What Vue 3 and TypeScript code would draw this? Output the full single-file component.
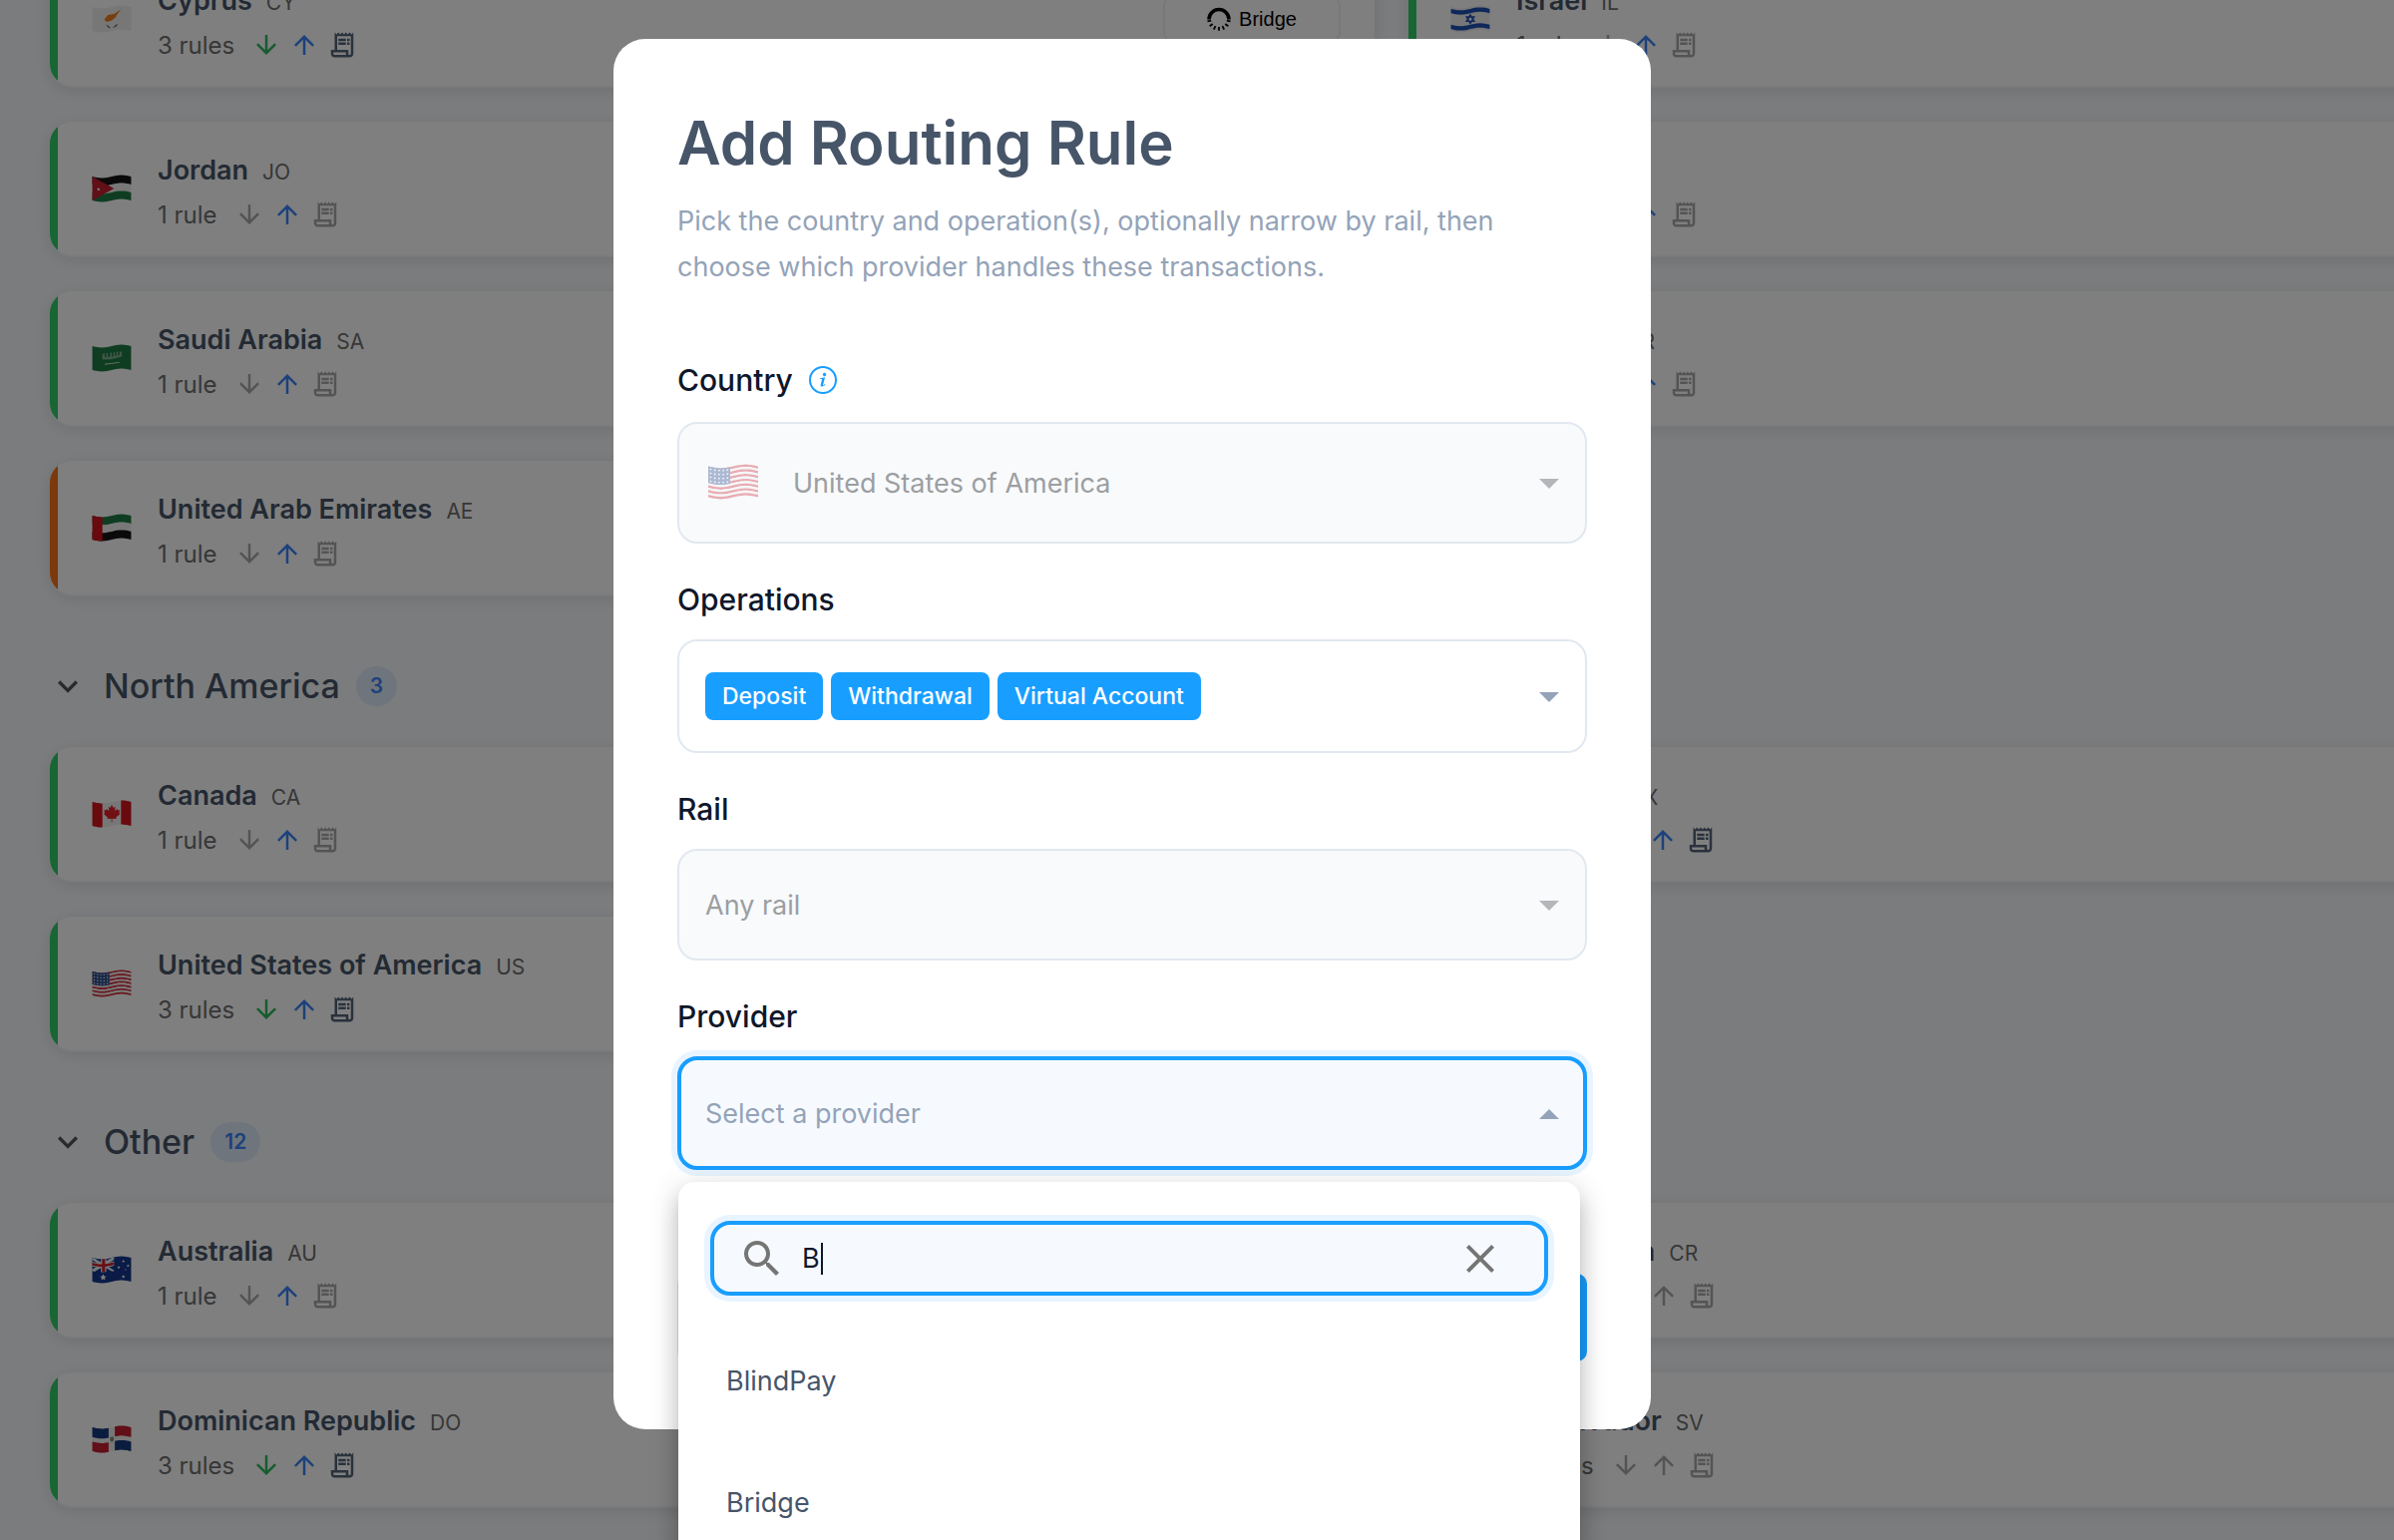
<script setup lang="ts">
import { ref } from 'vue'

type Shape = { d: string; fill: string }
type Country = {
  name: string
  code: string
  rules: string
  tone: 'ok' | 'warn'
  deposit: boolean
  withdraw: boolean
  account: boolean
  provider?: string
}
type Region = { name: string; count: number; countries: Country[] }

// Height of a waving flag's upper edge at a horizontal position.
const edge = (x: number): number => 2.5 + 1.9 * Math.sin((x / 50) * Math.PI * 2)

// Part of a waving flag between two columns and two relative heights.
function patch(x0: number, x1: number, a: number, b: number, fill: string): Shape {
  const steps = 12
  const top: string[] = []
  const bottom: string[] = []
  for (let i = 0; i <= steps; i++) {
    const x = x0 + ((x1 - x0) * i) / steps
    top.push(`${x.toFixed(1)} ${(edge(x) + a * 31).toFixed(1)}`)
    bottom.unshift(`${x.toFixed(1)} ${(edge(x) + b * 31).toFixed(1)}`)
  }
  return { d: `M${top.join('L')}L${bottom.join('L')}Z`, fill }
}

const star = (x: number, y: number, r: number, fill = '#fff'): Shape => {
  const pts = Array.from({ length: 10 }, (_, i) => {
    const q = i % 2 ? r * 0.45 : r
    const t = (i * Math.PI) / 5 - Math.PI / 2
    return `${(x + q * Math.cos(t)).toFixed(1)} ${(y + q * Math.sin(t)).toFixed(1)}`
  })
  return { d: `M${pts.join('L')}Z`, fill }
}

const usStripes = Array.from({ length: 13 }, (_, i) => patch(0, 50, i / 13, (i + 1) / 13, i % 2 ? '#f2f2f2' : '#d22f3c'))
const usStars = Array.from({ length: 20 }, (_, i) => {
  const x = 2.5 + (i % 5) * 4.2
  return star(x, edge(x) + 2.4 + Math.floor(i / 5) * 4, 1.3)
})

const flags: Record<string, Shape[]> = {
  CY: [
    patch(0, 50, 0, 1, '#eeeeee'),
    { d: 'M16 18L20 13L28 11.500L37 5.500L31 13.500L30 16L25 20L19 22L16 20Z', fill: '#f07d1c' },
    { d: 'M18 25Q21 26 24 30Q19 30 18 25ZM33 24Q29 25 26 29.500Q32 29 33 24Z', fill: '#7c8a78' },
  ],
  JO: [
    patch(0, 50, 0, 0.34, '#141414'),
    patch(0, 50, 0.33, 0.67, '#f0f0f0'),
    patch(0, 50, 0.66, 1, '#1d7a45'),
    { d: 'M0 2.500L28 18L0 33.500Z', fill: '#c41e2e' },
    star(8, 19, 2.4),
  ],
  SA: [
    patch(0, 50, 0, 1, '#1f7a42'),
    { d: 'M13 13L16 12V17H18V11.500H20V17L23 16V11H25V16H27V10.500H29V15H31V10H33V14.500H35V9.500H38V16L24 19.500L13 20Z', fill: '#7fae90' },
    { d: 'M16 25.500L35 23V24.200L16 26.800Z', fill: '#d9ebdf' },
  ],
  AE: [
    patch(0, 50, 0, 0.34, '#1d7a45'),
    patch(0, 50, 0.33, 0.67, '#f0f0f0'),
    patch(0, 50, 0.66, 1, '#141414'),
    patch(0, 13, 0, 1, '#d3141e'),
  ],
  CA: [
    patch(0, 50, 0, 1, '#eeeeee'),
    patch(0, 13, 0, 1, '#d3141e'),
    patch(37, 50, 0, 1, '#d3141e'),
    { d: 'M25 6L27 10L29.500 9L29 14L32 11.500L33 13.500L35.500 13L34.500 17L36 18L30.500 22.500L31 24.500L25.600 24V29H24.600V24L19 24.500L19.800 22.500L14.500 18L16 17L15 13L17.500 13.500L18.500 11.500L21.500 14L21 9L23.300 10Z', fill: '#e0202a' },
  ],
  US: [...usStripes, patch(0, 22, 0, 7 / 13, '#33528f'), ...usStars],
  AU: [
    patch(0, 50, 0, 1, '#12378c'),
    { d: 'M0 3L3 3.500L28 18.500V20L25 20L0 5.500Z', fill: '#f0f0f0' },
    { d: 'M28 2.500V5L3 20.500L0 19.500V17.500L25 2.500Z', fill: '#f0f0f0' },
    patch(11, 18, 0, 0.54, '#f0f0f0'),
    patch(0, 28, 0.17, 0.36, '#f0f0f0'),
    patch(12.5, 16.5, 0, 0.54, '#d3202c'),
    patch(0, 28, 0.21, 0.32, '#d3202c'),
    star(14, 28, 4.4),
    star(40, 7, 2),
    star(34, 15, 2),
    star(46, 13, 2),
    star(40, 27, 2.4),
    star(43, 18, 1.2),
  ],
  DO: [
    patch(0, 50, 0, 1, '#eeeeee'),
    patch(0, 21, 0, 0.41, '#173a7d'),
    patch(29, 50, 0, 0.41, '#c41e2e'),
    patch(0, 21, 0.6, 1, '#c41e2e'),
    patch(29, 50, 0.6, 1, '#173a7d'),
    { d: 'M23 15H27.500V19.500L25 21.500L23 19.500Z', fill: '#7d8c74' },
  ],
  IL: [
    patch(0, 50, 0, 1, '#eeeeee'),
    patch(0, 50, 0.08, 0.26, '#1f50b5'),
    patch(0, 50, 0.74, 0.92, '#1f50b5'),
    { d: 'M25 11L31.500 22H18.500ZM25 14.500L21.600 20.200H28.400Z', fill: '#1f50b5' },
    { d: 'M25 25.500L18.500 14.500H31.500ZM25 22L28.400 16.300H21.600Z', fill: '#1f50b5' },
  ],
  QA: [patch(0, 50, 0, 1, '#8a1538'), patch(0, 16, 0, 1, '#eeeeee')],
  TR: [patch(0, 50, 0, 1, '#d3141e'), star(28, 18, 4)],
  MX: [patch(0, 17, 0, 1, '#1d7a45'), patch(17, 33, 0, 1, '#eeeeee'), patch(33, 50, 0, 1, '#d3141e')],
  CR: [patch(0, 50, 0, 1, '#173a7d'), patch(0, 50, 0.17, 0.83, '#eeeeee'), patch(0, 50, 0.33, 0.67, '#d3141e')],
  SV: [patch(0, 50, 0, 1, '#1f50b5'), patch(0, 50, 0.33, 0.67, '#eeeeee')],
}

function country(name: string, code: string, rules: string, ops: string, extra: Partial<Country> = {}): Country {
  return {
    name,
    code,
    rules,
    tone: 'ok',
    deposit: ops.includes('d'),
    withdraw: ops.includes('w'),
    account: ops.includes('a'),
    ...extra,
  }
}

const regions: Region[] = [
  {
    name: 'Middle East',
    count: 7,
    countries: [
      country('Cyprus', 'CY', '3 rules', 'dwa', { provider: 'Bridge' }),
      country('Israel', 'IL', '1 rule', 'w'),
      country('Jordan', 'JO', '1 rule', 'w'),
      country('Qatar', 'QA', '1 rule', 'w'),
      country('Saudi Arabia', 'SA', '1 rule', 'w'),
      country('Türkiye', 'TR', '1 rule', 'w'),
      country('United Arab Emirates', 'AE', '1 rule', 'w', { tone: 'warn' }),
    ],
  },
  {
    name: 'North America',
    count: 3,
    countries: [
      country('Canada', 'CA', '1 rule', 'w'),
      country('Mexico', 'MX', '3 rules', 'dwa'),
      country('United States of America', 'US', '3 rules', 'dwa'),
    ],
  },
  {
    name: 'Other',
    count: 12,
    countries: [
      country('Australia', 'AU', '1 rule', 'w'),
      country('Costa Rica', 'CR', '0 rules', ''),
      country('Dominican Republic', 'DO', '3 rules', 'dwa'),
      country('El Salvador', 'SV', '0 rules', ''),
    ],
  },
]

const operations = ['Deposit', 'Withdrawal', 'Virtual Account']
const providers = ['BlindPay', 'Bridge']
const query = ref('B')
const ringTicks = [12, 38, 64, 90, 116, 142, 168]
</script>

<template>
  <div class="page">
    <main class="board">
      <section v-for="(region, index) in regions" :key="region.name" class="region">
        <header v-if="index > 0" class="region-head">
          <svg class="chevron" viewBox="0 0 24 24"><path d="M16.590 8.590L12 13.170L7.410 8.590L6 10l6 6 6-6z" /></svg>
          <h2>{{ region.name }}</h2>
          <span class="count">{{ region.count }}</span>
        </header>
        <div class="grid">
          <article v-for="item in region.countries" :key="item.code" class="card">
            <span class="bar" :class="item.tone"></span>
            <svg class="flag" viewBox="0 0 50 36">
              <path v-for="(s, i) in flags[item.code]" :key="i" :d="s.d" :fill="s.fill" fill-rule="evenodd" />
            </svg>
            <div class="info">
              <div class="line">
                <h3>{{ item.name }}</h3>
                <span class="code">{{ item.code }}</span>
              </div>
              <div class="line rules">
                <span>{{ item.rules }}</span>
                <div class="ops">
                  <svg viewBox="0 0 24 24" :class="{ green: item.deposit }"><path d="M20 12l-1.410-1.410L13 16.170V4h-2v12.170l-5.580-5.590L4 12l8 8 8-8z" /></svg>
                  <svg viewBox="0 0 24 24" :class="{ blue: item.withdraw }"><path d="M4 12l1.410 1.410L11 7.830V20h2V7.830l5.580 5.590L20 12l-8-8-8 8z" /></svg>
                  <svg viewBox="0 0 24 24" :class="{ slate: item.account }">
                    <path d="M19.500 3.500L18 2l-1.500 1.500L15 2l-1.500 1.500L12 2l-1.500 1.500L9 2 7.500 3.500 6 2v14H3v3c0 1.660 1.340 3 3 3h12c1.660 0 3-1.340 3-3V2l-1.500 1.500zM15 20H6c-.55 0-1-.45-1-1v-1h10v2zm4-1c0 .55-.45 1-1 1s-1-.45-1-1v-3H8V5h11v14z" />
                    <path d="M9 7h6v2H9zM16 7h2v2h-2zM9 10h6v2H9zM16 10h2v2h-2z" />
                  </svg>
                </div>
              </div>
            </div>
            <div v-if="item.provider" class="provider-pill">
              <svg viewBox="0 0 24 24">
                <path d="M2 12.500a10 10 0 0 1 20 0" fill="none" stroke="#000" stroke-width="3.600" />
                <path v-for="t in ringTicks" :key="t" d="M20 12H23.800" stroke="#000" stroke-width="1.800" :transform="`rotate(${t} 12 12)`" />
              </svg>
              <span>{{ item.provider }}</span>
            </div>
          </article>
        </div>
      </section>
    </main>

    <div class="overlay">
      <form class="modal" role="dialog" aria-labelledby="dialog-title" @submit.prevent>
        <h1 id="dialog-title">Add Routing Rule</h1>
        <p class="lead">Pick the country and operation(s), optionally narrow by rail, then choose which provider handles these transactions.</p>

        <div class="field">
          <div class="label-row">
            <label for="country">Country</label>
            <svg class="hint" viewBox="0 0 28 28">
              <circle cx="14" cy="14" r="13" fill="none" stroke="#189eff" stroke-width="2" />
              <path d="M15.600 6.800a1.700 1.700 0 1 1-.1 0zM11.200 12.200l4.900-.9-2 7.500c-.3 1 .4 1 1.800-.7l.6.5c-1.600 2.200-5.500 3-4.700-.2l1.200-4.700c.2-.7-.1-.9-1.900-.8z" fill="#189eff" />
            </svg>
          </div>
          <div class="control">
            <svg class="flag large" viewBox="0 0 50 36">
              <path v-for="(s, i) in flags.US" :key="i" :d="s.d" :fill="s.fill" />
            </svg>
            <select id="country" class="box country" disabled>
              <option>United States of America</option>
            </select>
            <svg class="caret muted" viewBox="0 0 20 10"><path d="M0 0H20L10 10Z" /></svg>
          </div>
        </div>

        <div class="field">
          <label for="operations">Operations</label>
          <div class="control">
            <button id="operations" type="button" class="box chips" aria-haspopup="listbox">
              <span v-for="op in operations" :key="op" class="chip">{{ op }}</span>
            </button>
            <svg class="caret" viewBox="0 0 20 10"><path d="M0 0H20L10 10Z" /></svg>
          </div>
        </div>

        <div class="field">
          <label for="rail">Rail</label>
          <div class="control">
            <select id="rail" class="box" disabled>
              <option>Any rail</option>
            </select>
            <svg class="caret muted" viewBox="0 0 20 10"><path d="M0 0H20L10 10Z" /></svg>
          </div>
        </div>

        <div class="field">
          <label for="provider">Provider</label>
          <div class="control">
            <button id="provider" type="button" class="box open" aria-haspopup="listbox" aria-expanded="true">Select a provider</button>
            <svg class="caret" viewBox="0 0 20 10"><path d="M0 10H20L10 0Z" /></svg>
            <div class="menu">
              <div class="search">
                <svg class="search-icon" viewBox="0 0 24 24"><path d="M15.500 14h-.79l-.28-.27C15.410 12.590 16 11.110 16 9.500 16 5.910 13.090 3 9.500 3S3 5.910 3 9.500 5.910 16 9.500 16c1.610 0 3.090-.59 4.230-1.570l.27.28v.79l5 4.990L20.490 19l-4.990-5zm-6 0C7.010 14 5 11.990 5 9.500S7.010 5 9.500 5 14 7.010 14 9.500 11.990 14 9.500 14z" /></svg>
                <input v-model="query" type="text" aria-label="Search providers" />
                <span class="cursor"></span>
                <button type="button" class="clear" aria-label="Clear search">
                  <svg viewBox="0 0 24 24"><path d="M19 6.410L17.590 5 12 10.590 6.410 5 5 6.410 10.590 12 5 17.590 6.410 19 12 13.410 17.590 19 19 17.590 13.410 12z" /></svg>
                </button>
              </div>
              <ul role="listbox" aria-label="Providers">
                <li v-for="p in providers" :key="p" role="option">{{ p }}</li>
              </ul>
            </div>
          </div>
        </div>

        <div class="actions">
          <button type="button" class="btn ghost" aria-label="Cancel"></button>
          <button type="submit" class="btn primary" aria-label="Add rule"></button>
        </div>
      </form>
    </div>
  </div>
</template>

<style>
body {
  margin: 0;
}
</style>

<style scoped>
* {
  box-sizing: border-box;
}

.page {
  position: relative;
  height: 100vh;
  overflow: hidden;
  background: #f7f9fb;
  color: #475569;
  font-family: Inter, 'Liberation Sans', sans-serif;
}

h1,
h2,
h3,
p,
ul {
  margin: 0;
  padding: 0;
}

button,
select,
input {
  font: inherit;
}

/* The list is scrolled, so its first row starts above the window. */
.board {
  margin-top: -48px;
  padding-left: 50px;
}

.page::before {
  content: '';
  display: table;
}

.region-head {
  display: flex;
  align-items: center;
  height: 40px;
  margin: 72px 0 41px;
}

.chevron {
  width: 40px;
  height: 40px;
  margin: 0 16px 0 -2px;
  fill: #555;
}

.region-head h2 {
  font-size: 34px;
  font-weight: 500;
  line-height: 40px;
}

.count {
  margin-left: 16px;
  padding: 0 14px;
  border-radius: 20px;
  background: #dfebfb;
  color: #3b82f6;
  font-size: 21px;
  font-weight: 600;
  line-height: 40px;
}

.grid {
  display: grid;
  grid-template-columns: repeat(2, minmax(1328px, 1fr));
  gap: 36px 34px;
}

.card {
  display: flex;
  align-items: center;
  height: 134px;
  overflow: hidden;
  padding-right: 34px;
  border-radius: 22px;
  background: #fff;
  box-shadow: 0 2px 0 #f1f4f8, 0 4px 16px rgba(15, 23, 42, 0.12);
}

.bar {
  align-self: stretch;
  flex: none;
  width: 8px;
}

.bar.ok {
  background: #2fcc66;
}

.bar.warn {
  background: #f97316;
}

.flag {
  flex: none;
  width: 40px;
  height: 28px;
  margin: 0 26px 0 34px;
}

.info {
  flex: 1;
  padding-top: 7px;
}

.line {
  display: flex;
  align-items: baseline;
  gap: 14px;
  height: 45px;
  line-height: 45px;
}

.line h3 {
  font-size: 27px;
  font-weight: 600;
}

.code {
  color: #6e6e6e;
  font-size: 21px;
}

.line.rules {
  align-items: center;
  gap: 17px;
  color: #6e6e6e;
  font-size: 24px;
}

.ops {
  display: flex;
  gap: 8px;
}

.ops svg {
  width: 30px;
  height: 30px;
  fill: #a9a9a9;
}

.ops .green {
  fill: #2fb85c;
}

.ops .blue {
  fill: #3b82f6;
}

.ops .slate {
  fill: #55647a;
}

.provider-pill {
  display: flex;
  align-items: center;
  justify-content: center;
  gap: 8px;
  width: 178px;
  height: 44px;
  border: 2px solid #edf0f4;
  border-radius: 8px;
  color: #000;
  font-family: 'Liberation Sans', sans-serif;
  font-size: 20px;
}

.provider-pill svg {
  width: 24px;
  height: 24px;
}

.overlay {
  position: absolute;
  inset: 0;
  display: flex;
  align-items: flex-start;
  justify-content: center;
  overflow: hidden;
  padding: 39px 130px 0 0;
  background: rgba(0, 0, 0, 0.5);
}

.modal {
  width: 1040px;
  padding: 64px 64px 68px;
  border-radius: 32px;
  background: #fff;
}

h1 {
  font-size: 60px;
  font-weight: 600;
  line-height: 80px;
}

.lead {
  margin: 16px 0 70px;
  color: #94a3b8;
  font-size: 27px;
  line-height: 46px;
}

.field + .field {
  margin-top: 36px;
}

.label-row {
  display: flex;
  gap: 16px;
  margin-bottom: 2px;
}

label {
  display: block;
  margin-bottom: 20px;
  color: #0f172a;
  font-size: 30px;
  font-weight: 500;
  line-height: 40px;
}

.hint {
  width: 28px;
  height: 28px;
  margin-top: 6px;
}

.control {
  position: relative;
}

.box {
  display: block;
  width: 100%;
  height: 112px;
  margin: 0;
  padding: 0 26px;
  border: 2px solid #e2e8f0;
  border-radius: 20px;
  outline: none;
  background: #fff;
  color: #94a3b8;
  font-size: 27px;
  text-align: left;
  appearance: none;
}

.box:disabled {
  background: #f8fafc;
  color: #9c9ea1;
  opacity: 1;
}

.box.country {
  height: 122px;
  padding-left: 114px;
}

.box.chips {
  display: flex;
  align-items: center;
  gap: 8px;
  height: 114px;
}

.chip {
  padding: 0 17px;
  border-radius: 8px;
  background: #189eff;
  color: #fff;
  font-size: 23px;
  font-weight: 500;
  line-height: 48px;
}

.box.open {
  height: 114px;
  padding: 0 24px;
  border: 4px solid #189eff;
  background: #f6faff;
  box-shadow: 0 0 0 6px #e8f4ff;
}

.flag.large {
  position: absolute;
  top: 42px;
  left: 31px;
  width: 50px;
  height: 36px;
  margin: 0;
  opacity: 0.38;
}

.caret {
  position: absolute;
  top: 50%;
  right: 28px;
  width: 20px;
  height: 10px;
  margin-top: -4px;
  fill: #94a3b8;
}

.caret.muted {
  fill: #b4b6b9;
}

.menu {
  position: absolute;
  top: 126px;
  right: 7px;
  left: 1px;
  padding-top: 39px;
  border-radius: 16px;
  background: #fff;
  box-shadow: 0 10px 10px -6px rgba(0, 0, 0, 0.2), 0 16px 20px 2px rgba(0, 0, 0, 0.14), 0 6px 28px 4px rgba(0, 0, 0, 0.12);
}

.search {
  position: relative;
  display: flex;
  align-items: center;
  height: 75px;
  margin: 0 32px 25px;
  padding: 0 40px 0 24px;
  border: 4px solid #189eff;
  border-radius: 20px;
  background: #f6faff;
  box-shadow: 0 0 0 6px #e8f4ff;
}

.search-icon {
  flex: none;
  width: 48px;
  height: 48px;
  fill: #757575;
}

.search input {
  flex: 1;
  min-width: 0;
  margin-left: 16px;
  padding: 0;
  border: 0;
  outline: none;
  background: none;
  color: #0f172a;
  caret-color: transparent;
  font-size: 27px;
  line-height: 40px;
}

.cursor {
  position: absolute;
  top: 18px;
  left: 107px;
  width: 2px;
  height: 32px;
  background: #0f172a;
}

.clear {
  flex: none;
  width: 48px;
  height: 48px;
  padding: 0;
  border: 0;
  background: none;
}

.clear svg {
  display: block;
  fill: #757575;
}

.menu ul {
  list-style: none;
}

.menu li {
  height: 122px;
  padding: 0 48px;
  font-size: 27px;
  line-height: 122px;
}

.actions {
  display: flex;
  justify-content: space-between;
  margin-top: 104px;
}

.btn {
  width: 440px;
  height: 88px;
  border: 0;
  border-radius: 10px;
}

.btn.ghost {
  background: #e2e8f0;
}

.btn.primary {
  background: #189eff;
}
</style>
